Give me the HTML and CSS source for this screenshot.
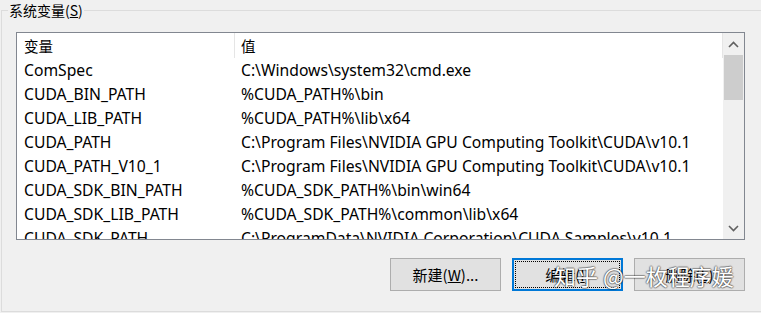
FILE: index.html
```html
<!DOCTYPE html>
<html lang="zh-CN">
<head>
<meta charset="utf-8">
<link rel="stylesheet" href="styles.css">
</head>
<body>
<fieldset class="group">
  <legend class="group-title">系统变量(<u>S</u>)</legend>
  <div class="listbox">
    <div class="list-main">
      <div class="row header">
        <div class="cell name">变量</div>
        <div class="cell value">值</div>
      </div>
      <div class="row"><div class="cell name">ComSpec</div><div class="cell value">C:\Windows\system32\cmd.exe</div></div>
      <div class="row"><div class="cell name">CUDA_BIN_PATH</div><div class="cell value">%CUDA_PATH%\bin</div></div>
      <div class="row"><div class="cell name">CUDA_LIB_PATH</div><div class="cell value">%CUDA_PATH%\lib\x64</div></div>
      <div class="row"><div class="cell name">CUDA_PATH</div><div class="cell value">C:\Program Files\NVIDIA GPU Computing Toolkit\CUDA\v10.1</div></div>
      <div class="row"><div class="cell name">CUDA_PATH_V10_1</div><div class="cell value">C:\Program Files\NVIDIA GPU Computing Toolkit\CUDA\v10.1</div></div>
      <div class="row"><div class="cell name">CUDA_SDK_BIN_PATH</div><div class="cell value">%CUDA_SDK_PATH%\bin\win64</div></div>
      <div class="row"><div class="cell name">CUDA_SDK_LIB_PATH</div><div class="cell value">%CUDA_SDK_PATH%\common\lib\x64</div></div>
      <div class="row"><div class="cell name">CUDA_SDK_PATH</div><div class="cell value">C:\ProgramData\NVIDIA Corporation\CUDA Samples\v10.1</div></div>
    </div>
    <div class="scrollbar">
      <div class="arrow">
        <svg width="11" height="7" viewBox="0 0 11 7"><path d="M1 6 L5.5 1.5 L10 6" fill="none" stroke="#606060" stroke-width="1.6"/></svg>
      </div>
      <div class="thumb"></div>
      <div class="track"></div>
      <div class="arrow">
        <svg width="11" height="7" viewBox="0 0 11 7"><path d="M1 1 L5.5 5.5 L10 1" fill="none" stroke="#606060" stroke-width="1.6"/></svg>
      </div>
    </div>
  </div>
  <div class="buttons">
    <button class="btn">新建(<u>W</u>)...</button>
    <button class="btn focused">编辑(<u>I</u>)</button>
    <button class="btn">删除(<u>L</u>)</button>
    <div class="watermark">知乎 @一枚程序媛</div>
  </div>
</fieldset>
</body>
</html>
```
FILE: styles.css
```css
html, body {
  margin: 0;
  padding: 0;
  background: #f0f0f0;
  overflow: hidden;
  width: 761px;
  height: 313px;
}
body {
  font-family: "Noto Sans", "Noto Sans CJK SC", sans-serif;
  font-size: 15.7px;
  color: #000;
}
.group {
  margin: 0 0 0 1px;
  width: 800px;
  height: 312px;
  box-sizing: border-box;
  border: 1px solid #dcdcdc;
  padding: 0 0 0 14px;
  min-width: 0;
}
.group-title {
  padding: 0 1px;
  margin-left: -8px;
  line-height: 20px;
  height: 20px;
  font-family: "Noto Sans CJK SC", sans-serif;
  font-size: 14px;
}
.listbox {
  margin-top: 12px;
  width: 729px;
  height: 208px;
  box-sizing: border-box;
  border: 1px solid #828790;
  background: #fff;
  display: flex;
  overflow: hidden;
}
.list-main {
  flex: 1;
  overflow: hidden;
}
.row {
  display: flex;
  height: 24px;
  line-height: 24px;
  white-space: nowrap;
}
.row.header {
  height: 25px;
  line-height: 25px;
  font-family: "Noto Sans CJK SC", sans-serif;
  font-size: 14.5px;
}
.cell.name {
  width: 217px;
  padding-left: 7px;
  box-sizing: border-box;
  flex: none;
}
.cell.value {
  padding-left: 7px;
  flex: 1;
}
.header .cell.name {
  border-right: 1px solid #e5e5e5;
  width: 218px;
}
.header .cell.value {
  border-right: 1px solid #e5e5e5;
  padding-left: 6px;
}
.scrollbar {
  width: 21px;
  flex: none;
  background: #f0f0f0;
  display: flex;
  flex-direction: column;
}
.arrow {
  height: 22px;
  display: flex;
  align-items: center;
  justify-content: center;
  flex: none;
}
.thumb {
  height: 45px;
  margin: 0 1px;
  background: #cdcdcd;
  flex: none;
}
.track {
  flex: 1;
}
.buttons {
  position: relative;
  width: 729px;
  margin-top: 18px;
  display: flex;
  justify-content: flex-end;
  gap: 11px;
}
.btn {
  width: 111px;
  height: 33px;
  box-sizing: border-box;
  background: #e1e1e1;
  border: 1px solid #adadad;
  font-family: "Noto Sans CJK SC", sans-serif;
  font-size: 15px;
  color: #000;
  padding: 0;
  margin: 0;
}
.btn u {
  text-decoration: underline;
}
.btn.focused {
  border: 2px solid #0078d7;
  outline: 1px dotted #000;
  outline-offset: -4px;
}
.watermark {
  position: absolute;
  left: 538px;
  top: 3px;
  font-family: "Noto Sans CJK SC", sans-serif;
  font-size: 22px;
  line-height: 28px;
  color: #ffffff;
  text-shadow: 1px 0 1px rgba(0,0,0,0.35), -1px 0 1px rgba(0,0,0,0.35), 0 1px 1px rgba(0,0,0,0.35), 0 -1px 1px rgba(0,0,0,0.35);
  white-space: nowrap;
}
```
